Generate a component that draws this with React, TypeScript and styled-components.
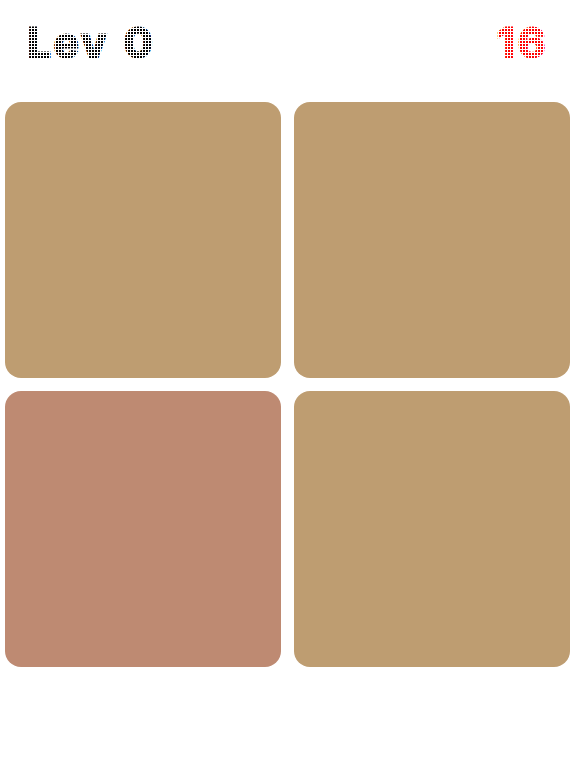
import React from "react";
import styled, { createGlobalStyle } from "styled-components";

const Global = createGlobalStyle`
  html, body { margin: 0; padding: 0; background: #ffffff; }
  body { font-family: Inter, "Liberation Sans", sans-serif; }
`;

const Page = styled.div`
  width: 576px;
  height: 768px;
  background: #ffffff;
  overflow: hidden;
`;

const Header = styled.header`
  display: flex;
  justify-content: space-between;
  align-items: flex-start;
  height: 84px;
  padding: 21px 28px 0 27px;
  box-sizing: border-box;
`;

const DotText = styled.span<{ $color: string }>`
  position: relative;
  display: inline-block;
  font-family: Inter, "Liberation Sans", sans-serif;
  font-weight: 800;
  font-size: 43px;
  line-height: 43px;
  letter-spacing: 2px;
  word-spacing: 3px;
  color: ${(p) => p.$color};
  -webkit-text-stroke: 1px ${(p) => p.$color};
  white-space: pre;

  &::after {
    content: "";
    position: absolute;
    inset: -4px;
    pointer-events: none;
    background-image:
      linear-gradient(90deg, transparent 2px, #ffffff 2px),
      linear-gradient(180deg, transparent 2px, #ffffff 2px);
    background-size: 3px 3px;
  }
`;

const Board = styled.div`
  display: grid;
  grid-template-columns: 276px 276px;
  grid-auto-rows: 276px;
  gap: 13px;
  padding: 18px 0 0 5px;
`;

const Tile = styled.div<{ $color: string }>`
  background: ${(p) => p.$color};
  border-radius: 16px;
`;

const tiles = ["#be9d71", "#be9d71", "#be8a72", "#be9d71"];

export default function App() {
  return (
    <Page>
      <Global />
      <Header>
        <DotText $color="#000000">Lev 0</DotText>
        <DotText $color="#ff0000">16</DotText>
      </Header>
      <Board>
        {tiles.map((c, i) => (
          <Tile key={i} $color={c} />
        ))}
      </Board>
    </Page>
  );
}
